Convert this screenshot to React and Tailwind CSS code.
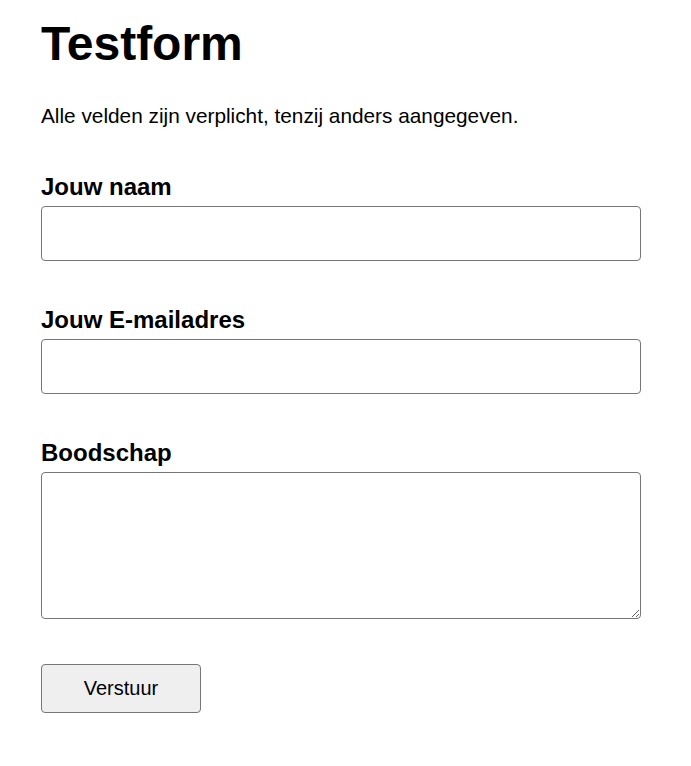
export default function App() {
  return (
    <div
      className="min-h-screen bg-white px-[41px] pt-[19.5px] text-black"
      style={{ fontFamily: '"Liberation Sans", Arial, sans-serif' }}
    >
      <h1 className="text-[48px] font-bold leading-[48px]">Testform</h1>
      <p className="mt-[38px] text-[20.8px] leading-[20px]">
        Alle velden zijn verplicht, tenzij anders aangegeven.
      </p>

      <form className="mt-[49px] w-[600px]" onSubmit={(e) => e.preventDefault()}>
        <label htmlFor="naam" className="block text-[24px] font-bold leading-[24px]">
          Jouw naam
        </label>
        <input
          id="naam"
          type="text"
          className="mt-[7.5px] block h-[55px] w-[600px] rounded-[4px] border border-[#767676] bg-white px-2"
        />

        <label htmlFor="email" className="mt-[46.5px] block text-[24px] font-bold leading-[24px]">
          Jouw E-mailadres
        </label>
        <input
          id="email"
          type="email"
          className="mt-[7.5px] block h-[55px] w-[600px] rounded-[4px] border border-[#767676] bg-white px-2"
        />

        <label htmlFor="boodschap" className="mt-[46.5px] block text-[24px] font-bold leading-[24px]">
          Boodschap
        </label>
        <textarea
          id="boodschap"
          className="mt-[7px] block h-[147px] w-[600px] rounded-[4px] border border-[#767676] bg-white p-2"
        />

        <button
          type="submit"
          className="mt-[45px] block h-[49px] w-[160px] rounded-[4px] border border-[#767676] bg-[#efefef] text-[20px] text-black"
        >
          Verstuur
        </button>
      </form>
    </div>
  );
}
